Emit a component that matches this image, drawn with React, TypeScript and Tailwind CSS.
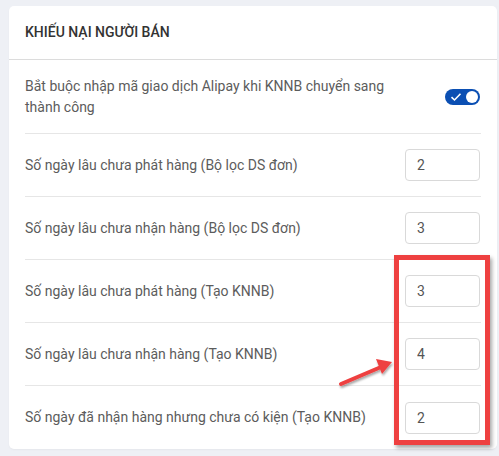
import React, { useState } from 'react';

const ROWS = [
  { id: 'ship-filter', label: 'Số ngày lâu chưa phát hàng (Bộ lọc DS đơn)', value: '2' },
  { id: 'recv-filter', label: 'Số ngày lâu chưa nhận hàng (Bộ lọc DS đơn)', value: '3' },
  { id: 'ship-knnb', label: 'Số ngày lâu chưa phát hàng (Tạo KNNB)', value: '3' },
  { id: 'recv-knnb', label: 'Số ngày lâu chưa nhận hàng (Tạo KNNB)', value: '4' },
  { id: 'noparcel-knnb', label: 'Số ngày đã nhận hàng nhưng chưa có kiện (Tạo KNNB)', value: '2' },
];

export default function App() {
  const [required, setRequired] = useState(true);
  const [values, setValues] = useState<Record<string, string>>(
    Object.fromEntries(ROWS.map(r => [r.id, r.value]))
  );

  return (
    <div
      className="relative min-h-[456px] bg-[#eef0f5] pl-[9px] pr-[2px] pt-[6px]"
      style={{ fontFamily: 'Roboto, "Noto Sans", sans-serif' }}
    >
      <div className="bg-white rounded-[5px] shadow-[0_1px_2px_rgba(0,0,0,0.04)]">
        <div className="h-[54px] px-4 flex items-center border-b border-[#dcdcdc]">
          <h1 className="text-[14px] font-medium text-[#333]">KHIẾU NẠI NGƯỜI BÁN</h1>
        </div>

        <div className="px-4">
          <div className="h-[74px] flex items-center border-b border-[#e6e6e6]">
            <div className="w-[380px] text-[14px] leading-[21px] text-[#5c5c5c]">
              Bắt buộc nhập mã giao dịch Alipay khi KNNB chuyển sang thành công
            </div>
            <div className="flex-1 flex justify-end pr-px">
              <button
                onClick={() => setRequired(v => !v)}
                className={`w-[35px] h-[16px] rounded-full flex items-center px-[2px] ${
                  required ? 'bg-[#0b4fb3] justify-between' : 'bg-[#bfbfbf] justify-start'
                }`}
              >
                {required && (
                  <svg width="12" height="10" viewBox="0 0 12 10" className="ml-[3px]">
                    <path d="M1.5 5.2 L4.5 8 L10.5 1.8" fill="none" stroke="white" strokeWidth="1.6" />
                  </svg>
                )}
                <span className="w-[12px] h-[12px] rounded-full bg-white" />
              </button>
            </div>
          </div>

          {ROWS.map((row, i) => (
            <div
              key={row.id}
              className={`h-[63px] flex items-center ${i < ROWS.length - 1 ? 'border-b border-[#e6e6e6]' : ''}`}
            >
              <div className="w-[380px] text-[14px] text-[#5c5c5c]">{row.label}</div>
              <input
                value={values[row.id]}
                onChange={e => setValues(prev => ({ ...prev, [row.id]: e.target.value }))}
                className="w-[75px] h-[32px] border border-[#d9d9d9] rounded-[4px] px-[11px] text-[14px] text-[#555] outline-none"
              />
            </div>
          ))}
        </div>
      </div>

      {/* annotation: red frame + arrow */}
      <div className="absolute left-[394px] top-[255px] w-[96px] h-[190px] border-[5px] border-[#ee4040] shadow-[2px_3px_4px_rgba(0,0,0,0.35)] pointer-events-none" />
      <svg className="absolute left-[335px] top-[355px] pointer-events-none" width="62" height="36" viewBox="0 0 62 36">
        <defs>
          <filter id="sh" x="-20%" y="-20%" width="140%" height="160%">
            <feDropShadow dx="1" dy="2" stdDeviation="1.2" floodColor="#000" floodOpacity="0.35" />
          </filter>
        </defs>
        <g filter="url(#sh)">
          <line x1="6" y1="29" x2="46" y2="12" stroke="#ee4040" strokeWidth="4" strokeLinecap="round" />
          <polygon points="57,7 41,4 47,19" fill="#ee4040" />
        </g>
      </svg>
    </div>
  );
}
